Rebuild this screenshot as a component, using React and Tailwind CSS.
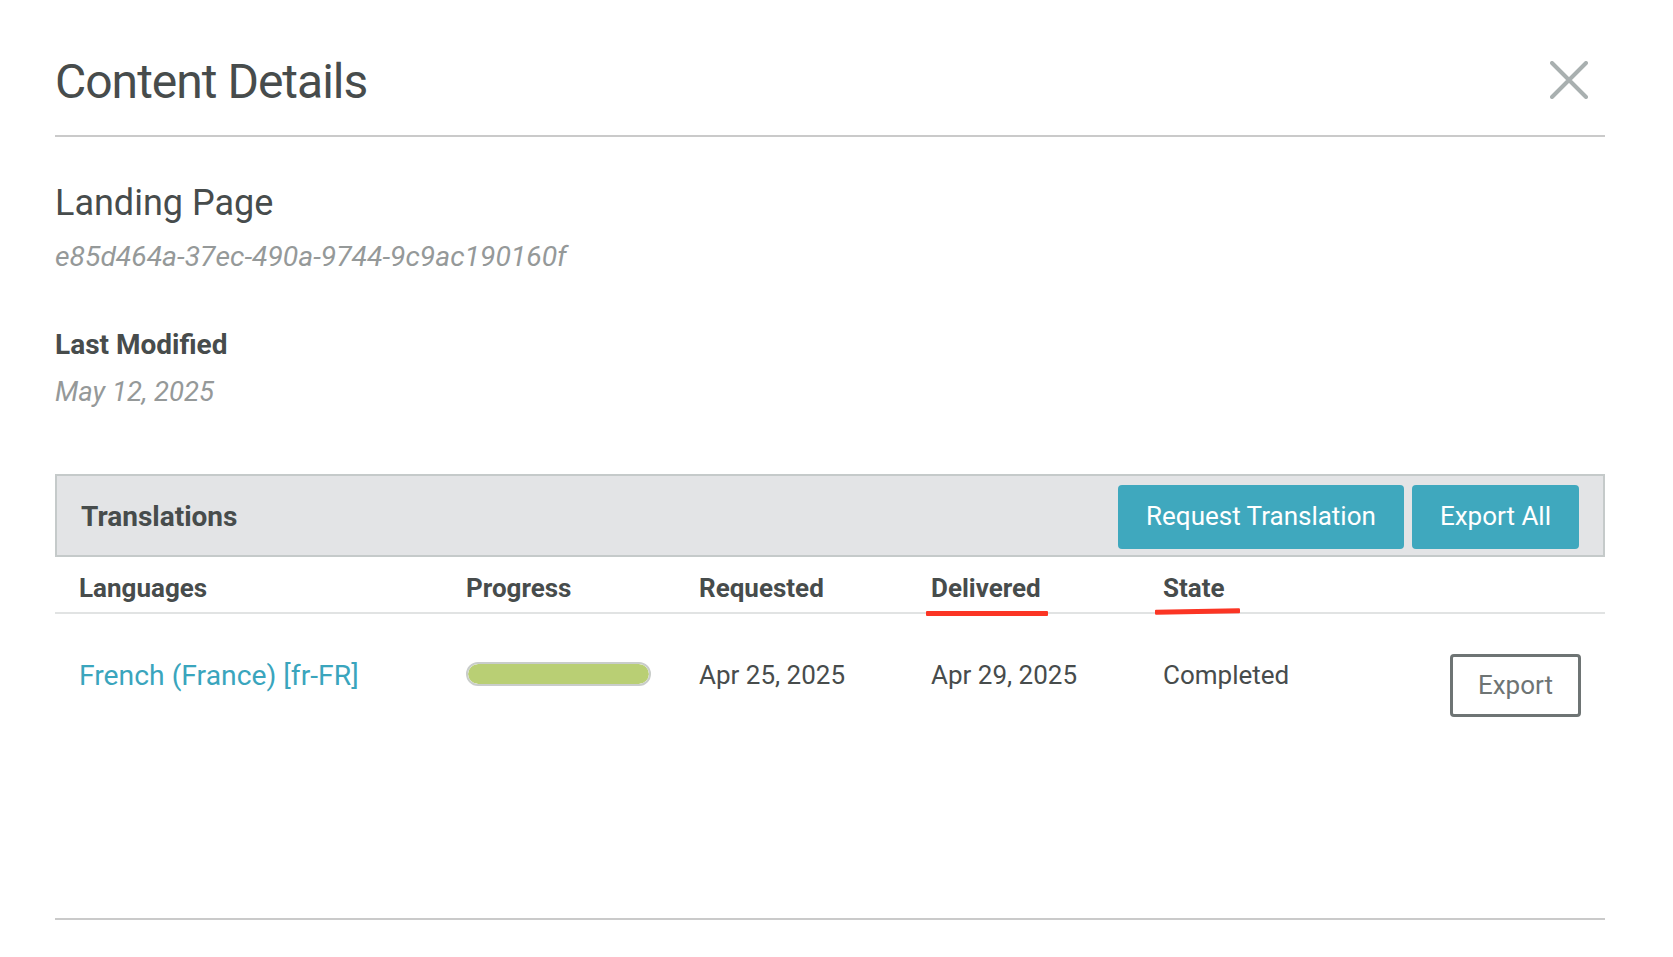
import { Fragment } from "react";

const COLS = "grid grid-cols-[387px_233px_232px_232px_232px_1fr]";

const HEADERS = [
  { label: "Languages" },
  { label: "Progress" },
  { label: "Requested" },
  { label: "Delivered", mark: "left-[-5px] top-[38px] h-[5px] w-[122px]" },
  { label: "State", mark: "left-[-8px] top-[36px] h-[5px] w-[85px] -rotate-[1deg]" },
  { label: "" }
];

const ROWS = [
  {
    language: "French (France) [fr-FR]",
    progress: 100,
    requested: "Apr 25, 2025",
    delivered: "Apr 29, 2025",
    state: "Completed"
  }
];

function CloseIcon() {
  return (
    <svg width="38" height="38" viewBox="0 0 38 38" fill="none">
      <path d="M2 2L36 36M36 2L2 36" stroke="#a9b0b0" strokeWidth="4" strokeLinecap="round" />
    </svg>
  );
}

export default function App() {
  return (
    <div className="min-h-[957px] bg-white pl-[55px] pr-[68px] pt-[53px] font-['Roboto',sans-serif] text-[#474c4c]">
      <header className="flex items-start justify-between">
        <h1 className="text-[48px] leading-[58px] tracking-[-1px] font-normal">Content Details</h1>
        <button className="mr-[17px] mt-[8px]">
          <CloseIcon />
        </button>
      </header>
      <div className="mt-[24px] h-[2px] bg-[#cacaca]" />

      <div className="mt-[45px] text-[36px] leading-[43px]">Landing Page</div>
      <div className="mt-[15px] text-[28.3px] leading-[34px] italic text-[#959999]">
        e85d464a-37ec-490a-9744-9c9ac190160f
      </div>

      <div className="mt-[54px] text-[28px] leading-[34px] font-bold">Last Modified</div>
      <div className="mt-[14px] text-[27.5px] leading-[32px] italic text-[#959999]">May 12, 2025</div>

      <section className="mt-[66px]">
        <div className="flex h-[83px] items-center justify-between border-2 border-[#c5caca] bg-[#e3e4e6] pl-[24px] pr-[24px] pt-[2px]">
          <div className="text-[28px] font-bold">Translations</div>
          <div className="flex gap-[8px]">
            <button className="h-[64px] rounded-[4px] bg-[#3fa8be] px-[28px] text-[26px] text-white">
              Request Translation
            </button>
            <button className="h-[64px] rounded-[4px] bg-[#3fa8be] px-[28px] text-[26px] text-white">
              Export All
            </button>
          </div>
        </div>

        <div className={`${COLS} h-[57px] border-b-2 border-[#e1e3e3]`}>
          {HEADERS.map((h, i) => (
            <div key={i} className="pl-[24px] pt-[12px] text-[26px] leading-[39px] font-bold">
              <span className="relative">
                {h.label}
                {h.mark && <span className={`absolute rounded-[1px] bg-[#fb3524] ${h.mark}`} />}
              </span>
            </div>
          ))}
        </div>

        {ROWS.map((r, i) => (
          <div key={i} className={`${COLS} h-[304px] items-start`}>
            <div className="pl-[24px] pt-[42px] text-[28.3px] leading-[39px] text-[#3aa5bd]">{r.language}</div>
            <div className="pl-[24px] pt-[42px]">
              <div className="flex h-[35px] items-center">
                <div className="h-[24px] w-[185px] overflow-hidden rounded-full border-2 border-[#c9cdca] bg-white">
                  <div className="h-full rounded-full bg-[#b9cf74]" style={{ width: `${r.progress}%` }} />
                </div>
              </div>
            </div>
            <div className="pl-[24px] pt-[42px] text-[26px] leading-[39px]">{r.requested}</div>
            <div className="pl-[24px] pt-[42px] text-[26px] leading-[39px]">{r.delivered}</div>
            <div className="pl-[24px] pt-[42px] text-[26px] leading-[39px]">{r.state}</div>
            <div className="flex justify-end pr-[24px] pt-[40px]">
              <button className="rounded-[4px] border-[3px] border-[#6e7474] px-[25px] py-[9px] text-[26px] leading-[39px] text-[#6e7474]">
                Export
              </button>
            </div>
          </div>
        ))}
      </section>

      <div className="h-[2px] bg-[#cacaca]" />
    </div>
  );
}
